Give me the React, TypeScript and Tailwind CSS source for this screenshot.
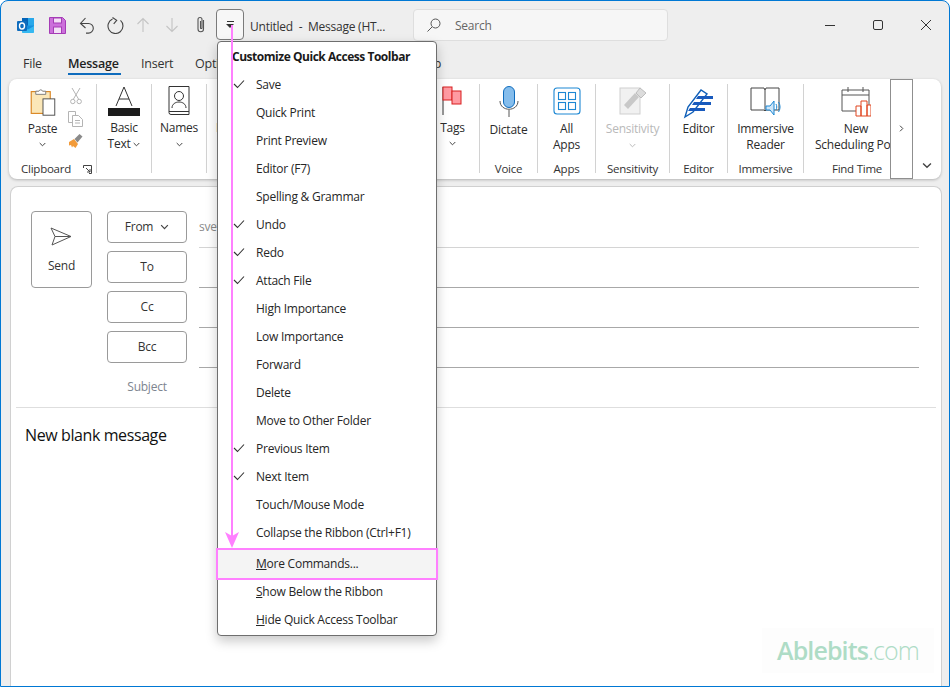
import { type ReactNode } from 'react'

const menuItems = [
  { label: 'Save', checked: true },
  { label: 'Quick Print' },
  { label: 'Print Preview' },
  { label: 'Editor (F7)' },
  { label: 'Spelling & Grammar' },
  { label: 'Undo', checked: true },
  { label: 'Redo', checked: true },
  { label: 'Attach File', checked: true },
  { label: 'High Importance' },
  { label: 'Low Importance' },
  { label: 'Forward' },
  { label: 'Delete' },
  { label: 'Move to Other Folder' },
  { label: 'Previous Item', checked: true },
  { label: 'Next Item', checked: true },
  { label: 'Touch/Mouse Mode' },
  { label: 'Collapse the Ribbon (Ctrl+F1)' },
]

function Chevron({ className = 'w-[7px] h-[5px]', color = '#444' }: { className?: string; color?: string }) {
  return (
    <svg viewBox="0 0 7 5" className={className} fill="none" stroke={color} strokeWidth="1">
      <path d="M.7 1l2.8 2.8L6.3 1" />
    </svg>
  )
}

function OutlookIcon() {
  return (
    <svg viewBox="0 0 17 17" className="w-[17px] h-[17px]">
      <rect x="5" y="1" width="12" height="15" rx="1" fill="#1490df" />
      <rect x="5" y="1" width="6" height="7.5" fill="#0364b8" />
      <rect x="11" y="1" width="6" height="7.5" fill="#28a8ea" />
      <path d="M5 9l6 3.500L17 9v7H5z" fill="#50d9ff" opacity=".55" />
      <rect x="0" y="4" width="10" height="10" rx="1" fill="#0f6cbd" />
      <ellipse cx="5" cy="9" rx="2.500" ry="3" fill="none" stroke="#fff" strokeWidth="1.4" />
    </svg>
  )
}

function SaveIcon() {
  return (
    <svg viewBox="0 0 17 17" className="w-[17px] h-[17px]">
      <path d="M.5.5h13L16.500 3.500v13H.5z" fill="#cc6fdb" stroke="#a53cb6" strokeWidth="1" />
      <rect x="4.500" y="1" width="8" height="5" fill="#f3dff6" stroke="#a53cb6" />
      <rect x="4.500" y="10" width="8" height="6.500" fill="#f3dff6" stroke="#a53cb6" />
    </svg>
  )
}

function QuickAccess() {
  return (
    <div className="flex items-center">
      <div className="ml-[16px]"><OutlookIcon /></div>
      <div className="ml-[15px]"><SaveIcon /></div>
      <svg viewBox="0 0 16 17" className="ml-[13px] w-[16px] h-[17px]" fill="none" stroke="#444" strokeWidth="1.1">
        <path d="M1.500 6.500h8a4.800 4.800 0 0 1 0 9.600H7M6.500 1L1.500 6.500l5 4.500" />
      </svg>
      <svg viewBox="0 0 17 17" className="ml-[12px] w-[17px] h-[17px]" fill="none" stroke="#444" strokeWidth="1.1">
        <path d="M13.500 3.400A7.500 7.500 0 1 1 5.500 2.100M5.500 .5l4.200 2.800-3 3.500" />
      </svg>
      <svg viewBox="0 0 14 16" className="ml-[12px] w-[14px] h-[16px]" fill="none" stroke="#c4c4c4" strokeWidth="1.1">
        <path d="M7 15V1.500M1.500 7L7 1.500 12.500 7" />
      </svg>
      <svg viewBox="0 0 14 16" className="ml-[15px] w-[14px] h-[16px]" fill="none" stroke="#c4c4c4" strokeWidth="1.1">
        <path d="M7 1v13.500M1.500 9L7 14.500 12.500 9" />
      </svg>
      <svg viewBox="0 0 12 18" className="ml-[16px] w-[12px] h-[18px]" fill="none" stroke="#555" strokeWidth="1.1">
        <path d="M8.500 4v9a2.700 2.700 0 0 1-5.500 0V3.500a2 2 0 0 1 4 0V12a.8.8 0 0 1-1.500 0V5" />
      </svg>
      <div className="ml-[9px] w-[28px] h-[31px] -mt-[1px] rounded-[4px] border border-[#7a7a7a] bg-[#f7f7f7] flex flex-col items-center justify-center gap-[2px]">
        <span className="w-[7px] h-px bg-[#333]" />
        <svg viewBox="0 0 8 4" className="w-[8px] h-[4px]"><path d="M0 0h8L4 4z" fill="#333" /></svg>
      </div>
    </div>
  )
}

function RibbonGroup({ width, label, children, sep = true }: { width: string; label?: ReactNode; children: ReactNode; sep?: boolean }) {
  return (
    <div className={`${width} shrink-0 flex flex-col relative ${sep ? 'border-r border-[#d2d2d2]' : ''} mt-[5px] h-[89px]`}>
      <div className="flex-1 flex flex-col items-center min-h-0 overflow-hidden">{children}</div>
      <div className="h-[14px] -mb-[3px] text-center text-[11.5px] leading-[14px] text-[#333] whitespace-nowrap">{label}</div>
    </div>
  )
}

function Ribbon() {
  return (
    <div className="mx-[8px] mt-[3px] h-[100px] rounded-[8px] bg-white shadow-[0_1px_3px_rgba(0,0,0,0.25)] flex pl-[1px] text-[12px] leading-[16px] text-[#2b2b2b]">
      <RibbonGroup
        width="w-[87px]"
        label={
          <div className="flex items-center pl-[11px] gap-[12px]">
            <span>Clipboard</span>
            <svg viewBox="0 0 9 9" className="w-[9px] h-[9px]" fill="none" stroke="#444">
              <path d="M.5 3V.5h8v8H6M3 3l4 4M7 4v3H4" />
            </svg>
          </div>
        }
      >
        <div className="flex w-full">
          <div className="w-[52px] flex flex-col items-center pl-[13px] pt-[4px]">
            <svg viewBox="0 0 28 32" className="w-[28px] h-[29px]">
              <rect x="1" y="4" width="21" height="24" fill="#fbe7b8" stroke="#d8801a" strokeWidth="1.2" />
              <path d="M6 7V3.500h3.500C10 1.500 13 1.500 13.500 3.500H17V7z" fill="#fff" stroke="#777" />
              <rect x="14" y="12" width="13" height="18" fill="#fff" stroke="#444" />
            </svg>
            <span className="mt-[4px]">Paste</span>
            <Chevron className="mt-[5px] w-[7px] h-[5px]" />
          </div>
          <div className="flex flex-col items-center pl-[6px] pt-[3px] gap-[6px]">
            <svg viewBox="0 0 12 18" className="w-[12px] h-[18px]" fill="none" stroke="#b4b4b4">
              <path d="M2 1l6.500 11M10 1L3.500 12" />
              <circle cx="2.800" cy="14.500" r="2.200" />
              <circle cx="9.200" cy="14.500" r="2.200" />
            </svg>
            <svg viewBox="0 0 16 16" className="w-[16px] h-[16px]" fill="#fff" stroke="#b4b4b4">
              <path d="M.5.5h7v11h-7z" />
              <path d="M4.500 4.500h6l4 4v7h-10z" />
              <path d="M7 9.500h5M7 12h5" />
            </svg>
            <svg viewBox="0 0 16 16" className="w-[16px] h-[16px]">
              <path d="M1 9l5-3 4 5-2.500 4L5 13l-1 1.500L3 12l-2 .5z" fill="#f29b3a" />
              <path d="M6.500 6l5-5 3 2.500-5 6z" fill="#8a8a8a" />
            </svg>
          </div>
        </div>
      </RibbonGroup>

      <RibbonGroup width="w-[55px]">
        <svg viewBox="0 0 32 30" className="mt-[2px] w-[32px] h-[30px]">
          <path d="M8 20L16 1l8 19M11 13h10" fill="none" stroke="#333" strokeWidth="1" />
          <rect x="0" y="22" width="32" height="8" fill="#1c1c1c" />
        </svg>
        <span className="mt-[4px]">Basic</span>
        <span className="flex items-center gap-[3px]">Text <Chevron /></span>
      </RibbonGroup>

      <RibbonGroup width="w-[55px]">
        <svg viewBox="0 0 22 29" className="mt-[2px] w-[22px] h-[29px]" fill="none" stroke="#333">
          <path d="M1 .5h20v28H3a2 2 0 0 1-2-2z" />
          <path d="M1 25.500h20" />
          <circle cx="11" cy="10" r="4.500" />
          <path d="M4 22c0-8 14-8 14 0" />
        </svg>
        <span className="mt-[5px]">Names</span>
        <Chevron className="mt-[6px] w-[7px] h-[5px]" />
      </RibbonGroup>

      <RibbonGroup width="w-[231px]" sep={false}>
        <span className="self-start pl-[9px] mt-[36px]">Include</span>
      </RibbonGroup>

      <RibbonGroup width="w-[42px]">
        <svg viewBox="0 0 20 29" className="mt-[2px] self-end mr-[17px] w-[20px] h-[29px] shrink-0">
          <path d="M1 1v28" stroke="#333" />
          <rect x="1" y="1" width="9" height="13" fill="#ff9aa2" stroke="#d81e1e" />
          <rect x="10" y="5" width="9" height="13" fill="#ff9aa2" stroke="#d81e1e" />
        </svg>
        <span className="mt-[5px] pr-[12px]">Tags</span>
        <Chevron className="mt-[5px] mr-[13px] w-[7px] h-[5px]" />
      </RibbonGroup>

      <RibbonGroup width="w-[58px]" label="Voice">
        <svg viewBox="0 0 20 31" className="mt-[2px] w-[20px] h-[31px]">
          <rect x="4.500" y="0.500" width="11" height="21" rx="5.500" fill="#85bdec" stroke="#0f6cbd" />
          <path d="M1 15c0 11 18 11 18 0M10 24v7" fill="none" stroke="#555" />
        </svg>
        <span className="mt-[5px]">Dictate</span>
      </RibbonGroup>

      <RibbonGroup width="w-[58px]" label="Apps">
        <svg viewBox="0 0 28 28" className="mt-[3px] w-[28px] h-[28px]" fill="none" stroke="#1c87d3" strokeWidth="1.1">
          <rect x="1" y="1" width="26" height="26" rx="3" />
          <rect x="5.500" y="5.500" width="7" height="7" />
          <rect x="15.500" y="5.500" width="7" height="7" />
          <rect x="5.500" y="15.500" width="7" height="7" />
          <rect x="15.500" y="15.500" width="7" height="7" />
        </svg>
        <span className="mt-[6px]">All</span>
        <span>Apps</span>
      </RibbonGroup>

      <RibbonGroup width="w-[74px]" label="Sensitivity">
        <svg viewBox="0 0 28 28" className="mt-[3px] w-[28px] h-[28px]">
          <rect x="1" y="1" width="20" height="26" fill="#f1f1f1" stroke="#cfcfcf" />
          <path d="M5 18L16 6l4 4L9 22z" fill="#c8c8c8" />
          <path d="M17 6l4-5 6 5-5 5z" fill="#dcdcdc" stroke="#bdbdbd" />
        </svg>
        <span className="mt-[6px] text-[#b9b9b9]">Sensitivity</span>
        <Chevron className="mt-[6px] w-[7px] h-[5px]" color="#bbb" />
      </RibbonGroup>

      <RibbonGroup width="w-[58px]" label="Editor">
        <svg viewBox="0 0 32 32" className="mt-[3px] w-[32px] h-[32px]">
          <path d="M2 30l3-10L18 3l6 4L10 25z" fill="#fff" stroke="#0f5fb8" strokeWidth="1.4" />
          <path d="M15 9h15v3H13zM11 15h17v3H9zM7 21h15v3H5z" fill="#185abd" />
        </svg>
        <span className="mt-[2px]">Editor</span>
      </RibbonGroup>

      <RibbonGroup width="w-[76px]" label="Immersive">
        <svg viewBox="0 0 32 30" className="mt-[3px] w-[32px] h-[30px]">
          <path d="M1 1h13l1 2 1-2h13v22H16l-1 1-1-1H1z" fill="#fff" stroke="#444" />
          <path d="M15 3v20" stroke="#444" />
          <path d="M16 19h4l4-5v14l-4-5h-4z" fill="#cfe6f8" stroke="#1c87d3" />
          <path d="M26 17c1 2 1 4 0 6M28.500 15c2 3 2 7 0 10" fill="none" stroke="#1c87d3" />
        </svg>
        <span className="mt-[4px]">Immersive</span>
        <span>Reader</span>
      </RibbonGroup>

      <RibbonGroup width="w-[86px]" sep={false} label={<span className="block w-[106px]">Find Time</span>}>
        <svg viewBox="0 0 30 30" className="mt-[3px] ml-[18px] w-[30px] h-[30px] shrink-0">
          <path d="M1 3h27v21H1zM1 8h27M7 0v5M22 0v5" fill="none" stroke="#555" />
          <path d="M15 19h5v10h-5zM20 14h6v15h-6zM26 18h4v11h-4z" fill="#fff" stroke="#e0451f" />
        </svg>
        <span className="mt-[4px] ml-[18px]">New</span>
        <span className="self-start pl-[11px] whitespace-nowrap">Scheduling Poll</span>
      </RibbonGroup>

      <div className="w-[23px] h-[100px] shrink-0 border border-[#8f8f8f] bg-white flex items-center justify-center">
        <Chevron className="w-[7px] h-[5px] -rotate-90 -ml-[1px] -mt-[1px]" />
      </div>
      <div className="flex-1 flex items-end justify-center pb-[10px]">
        <Chevron className="w-[10px] h-[7px]" />
      </div>
    </div>
  )
}

function RecipientButton({ children }: { children: ReactNode }) {
  return (
    <div className="w-[80px] h-[32px] rounded-[4px] border border-[#9a9a9a] flex items-center justify-center gap-[7px] text-[12px] text-[#333]">
      {children}
    </div>
  )
}

function Compose() {
  return (
    <div className="ml-[9px] mr-[7px] mt-[7px] flex-1 rounded-t-[8px] border border-[#d0d0d0] border-b-0 bg-white flex flex-col" >
      <div className="flex pt-[24px] h-[221px] border-b border-[#dedede] mx-[5px]">
        <div className="ml-[15px] w-[61px] h-[77px] rounded-[4px] border border-[#9a9a9a] flex flex-col items-center pt-[15px] text-[12px] text-[#333]">
          <svg viewBox="0 0 22 19" className="-ml-[2px] w-[22px] h-[19px]" fill="none" stroke="#555">
            <path d="M1 1l20 8.500L2 18l3-8.500zM5 9.500h16" />
          </svg>
          <span className="mt-[11px]">Send</span>
        </div>
        <div className="ml-[15px] flex flex-col gap-[8px] w-[80px]">
          <RecipientButton>From <Chevron className="w-[9px] h-[6px]" /></RecipientButton>
          <RecipientButton>To</RecipientButton>
          <RecipientButton>Cc</RecipientButton>
          <RecipientButton>Bcc</RecipientButton>
          <div className="text-center text-[12px] text-[#7d8590] mt-[7px]">Subject</div>
        </div>
        <div className="ml-[12px] w-[720px] flex flex-col">
          <div className="h-[37px] border-b border-[#d4d4d4] text-[12px] text-[#8a8a8a] leading-[32px]">svetlana</div>
          <div className="h-[40px] border-b border-[#a8a8a8]" />
          <div className="h-[40px] border-b border-[#a8a8a8]" />
          <div className="h-[40px] border-b border-[#a8a8a8]" />
        </div>
      </div>
      <div className="pl-[14px] pt-[15px] text-[16px] leading-[24px] tracking-[-0.4px] text-[#111]">New blank message</div>
    </div>
  )
}

function CustomizeMenu() {
  return (
    <div className="absolute left-[217px] top-[41px] w-[220px] h-[595px] rounded-[4px] border border-[#6e6e6e] bg-white shadow-[0_5px_12px_rgba(0,0,0,0.22)] text-[12px] text-[#262626]">
      <div className="pl-[14px] pt-[6px] h-[29px] leading-[17px] font-bold tracking-[-0.47px] text-[#1a1a1a] whitespace-nowrap">Customize Quick Access Toolbar</div>
      {menuItems.map(item => (
        <div key={item.label} className="h-[28px] flex items-center relative pl-[38px] whitespace-nowrap">
          {item.checked && (
            <svg viewBox="0 0 12 10" className="absolute left-[15px] top-[8px] w-[12px] h-[10px]" fill="none" stroke="#333" strokeWidth="1.1">
              <path d="M1 5l3.500 3.500L11 1.500" />
            </svg>
          )}
          {item.label}
        </div>
      ))}
      <div className="h-[3px]" />
      <div className="h-[28px] flex items-center pl-[38px] bg-[#f4f4f4]"><span><u>M</u>ore Commands...</span></div>
      <div className="h-[28px] flex items-center pl-[38px]"><span><u>S</u>how Below the Ribbon</span></div>
      <div className="h-[28px] flex items-center pl-[38px]"><span><u>H</u>ide Quick Access Toolbar</span></div>
    </div>
  )
}

export default function App() {
  return (
    <div className="w-[950px] h-[687px] bg-white relative overflow-hidden tracking-[-0.24px]" style={{ fontFamily: '"Open Sans", "Noto Sans", sans-serif' }}>
      <div className="w-full h-full rounded-t-[8px] border border-[#0078d4] bg-[#eeeeee] flex flex-col">
        {/* title bar */}
        <div className="h-[40px] pt-[8px] flex items-center shrink-0">
          <QuickAccess />
          <span className="ml-[6px] mt-[3px] w-[160px] text-[12px] text-[#333] whitespace-pre">Untitled  -  Message (HT...</span>
          <div className="ml-[3px] w-[255px] h-[32px] rounded-[4px] border border-[#dedede] bg-[#f6f6f6] flex items-center text-[12px] text-[#666]">
            <svg viewBox="0 0 14 14" className="ml-[13px] w-[14px] h-[14px]" fill="none" stroke="#555">
              <circle cx="8.500" cy="5.500" r="4.500" />
              <path d="M5 9l-4.500 4.500" />
            </svg>
            <span className="ml-[14px] mt-[1px]">Search</span>
          </div>
          <div className="flex-1 flex items-center justify-end pr-[18px] gap-[38px]">
            <span className="w-[10px] h-px bg-[#333]" />
            <span className="w-[10px] h-[10px] rounded-[2px] border border-[#333]" />
            <svg viewBox="0 0 10 10" className="w-[10px] h-[10px]" fill="none" stroke="#333"><path d="M0 0l10 10M10 0L0 10" /></svg>
          </div>
        </div>
        {/* tabs */}
        <div className="h-[35px] pt-[14px] pl-[22px] flex items-start text-[12.5px] leading-[17px] text-[#333] shrink-0">
          <span className="w-[45px]">File</span>
          <span className="w-[73px] font-semibold text-[#222] h-[21px] relative">
            Message
            <span className="absolute left-0 top-[18px] w-[53px] h-[2px] bg-[#0f6cbd]" />
          </span>
          <span className="w-[54px]">Insert</span>
          <span className="w-[220px]">Options</span>
          <span>Help</span>
        </div>
        <Ribbon />
        <Compose />
      </div>

      <CustomizeMenu />

      {/* pink annotation */}
      <div className="absolute left-[231px] top-[25px] w-[2px] h-[512px] bg-[#ff80ff]" />
      <svg viewBox="0 0 14 16" className="absolute left-[225px] top-[532px] w-[14px] h-[16px]">
        <path d="M0 0l7 4 7-4-7 16z" fill="#ff80ff" />
      </svg>
      <div className="absolute left-[216px] top-[548px] w-[222px] h-[32px] border-2 border-[#ff80ff]" />

      {/* watermark */}
      <div className="absolute left-[762px] top-[628px] w-[172px] h-[45px] bg-[#fdfdfd] flex items-center justify-center text-[25px] text-[#aedcc6] tracking-[-0.9px]">
        <span className="font-semibold">Ablebits</span><span className="font-light">.com</span>
      </div>
    </div>
  )
}
